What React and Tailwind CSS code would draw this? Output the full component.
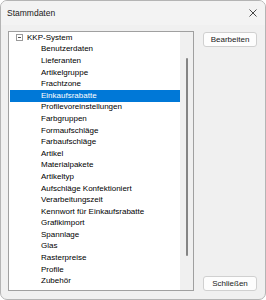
import React, { useState } from 'react';

const items = [
    'Benutzerdaten',
    'Lieferanten',
    'Artikelgruppe',
    'Frachtzone',
    'Einkaufsrabatte',
    'Profilevoreinstellungen',
    'Farbgruppen',
    'Formaufschläge',
    'Farbaufschläge',
    'Artikel',
    'Materialpakete',
    'Artikeltyp',
    'Aufschläge Konfektioniert',
    'Verarbeitungszeit',
    'Kennwort für Einkaufsrabatte',
    'Grafikimport',
    'Spannlage',
    'Glas',
    'Rasterpreise',
    'Profile',
    'Zubehör',
];

const DialogButton = ({ label, className = '' }) => (
    <button className={`h-[15px] w-[54px] rounded-[3px] border border-[#d0d0d0] bg-[#fdfdfd] text-[8px] leading-none text-[#1a1a1a] ${className}`}>
        {label}
    </button>
);

const App = () => {
    const [selected, setSelected] = useState('Einkaufsrabatte');

    return (
        <div className="w-[266px] h-[300px] bg-white font-['Liberation_Sans',Arial,sans-serif]">
            <div className="w-full h-full rounded-[7px] border border-[#b4b4b4] bg-[#f0f0f0] flex flex-col overflow-hidden">
                {/* title bar */}
                <div className="h-[24px] shrink-0 bg-[#f3f3f3] flex items-center justify-between pl-[6px] pr-[8px]">
                    <span className="text-[8.5px] text-[#1a1a1a]">Stammdaten</span>
                    <svg width="8" height="8" viewBox="0 0 8 8" className="mt-[-1px]">
                        <path d="M0.5 0.5 L7.5 7.5 M7.5 0.5 L0.5 7.5" stroke="#333" strokeWidth="0.9" fill="none" />
                    </svg>
                </div>

                {/* body */}
                <div className="flex flex-1 gap-[9px] pl-[7px] pr-[8px] pt-[6px] pb-[8px]">
                    <div className="w-[186px] h-[260px] border border-[#a0a0a0] bg-white flex">
                        <div className="flex-1 flex flex-col text-[8px] text-black">
                            <div className="h-[11.6px] flex items-center">
                                <span className="ml-[7px] w-[7px] h-[7px] border border-[#9a9a9a] flex items-center justify-center">
                                    <span className="w-[3px] h-px bg-[#555]" />
                                </span>
                                <span className="ml-[4px]">KKP-System</span>
                            </div>
                            {items.map((item) => (
                                <div
                                    key={item}
                                    onClick={() => setSelected(item)}
                                    className={`h-[11.6px] flex items-center ml-px whitespace-nowrap ${selected === item ? 'bg-[#0078d7] text-white' : ''}`}
                                >
                                    <span className="pl-[31px]">{item}</span>
                                </div>
                            ))}
                        </div>
                        {/* scrollbar */}
                        <div className="w-[13px] bg-[#f0f0f0] flex justify-center pt-[26px]">
                            <div className="w-[2px] h-[198px] rounded-full bg-[#858585]" />
                        </div>
                    </div>

                    <div className="flex flex-col justify-between pt-px">
                        <DialogButton label="Bearbeiten" />
                        <DialogButton label="Schließen" />
                    </div>
                </div>
            </div>
        </div>
    );
};

export default App;
